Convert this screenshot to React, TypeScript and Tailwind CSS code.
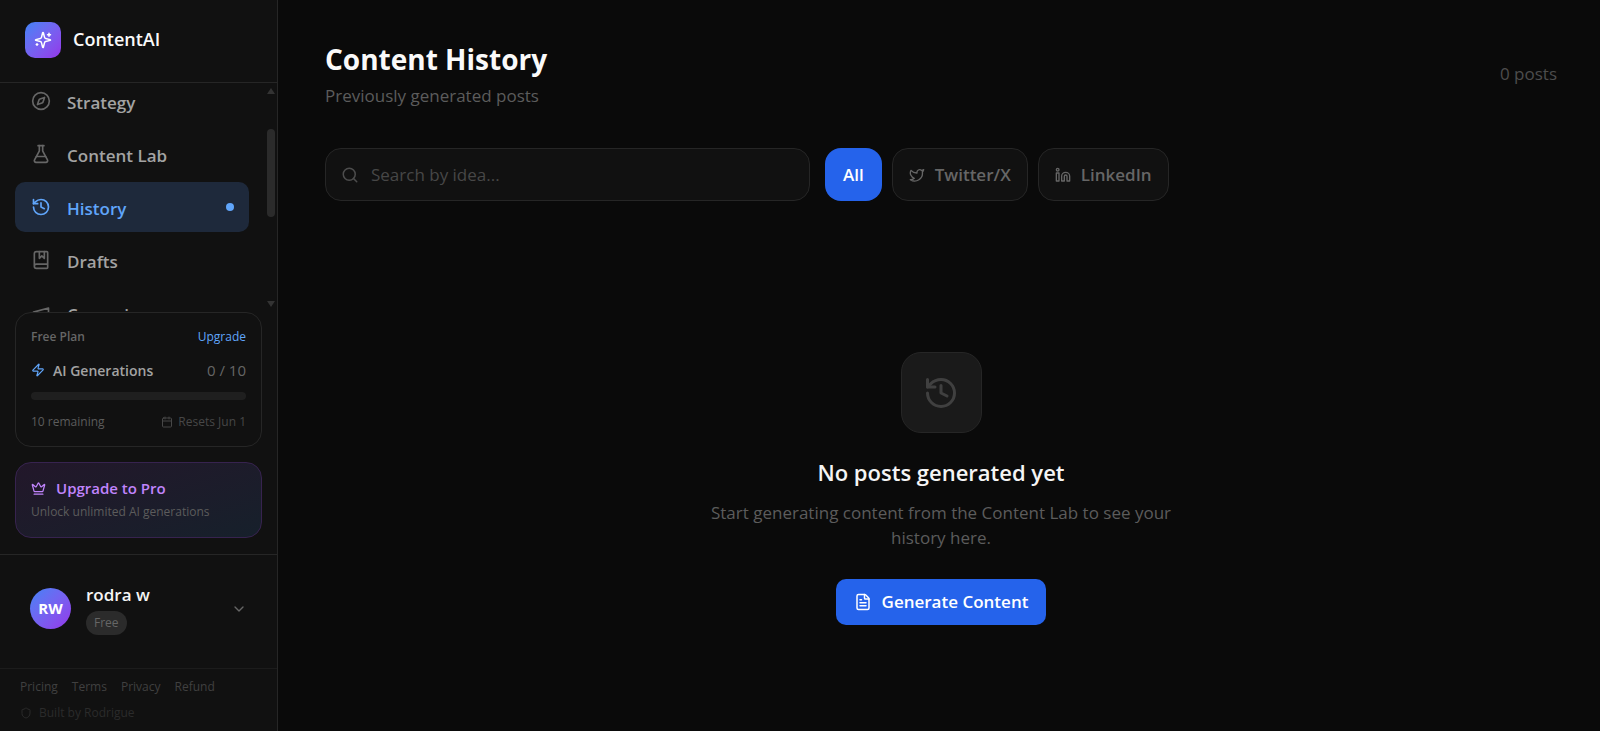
import React from "react";
import {
  Calendar,
  ChevronDown,
  Compass,
  Crown,
  FileText,
  FlaskConical,
  BookMarked,
  History,
  Linkedin,
  Search,
  Shield,
  Twitter,
  Zap,
} from "lucide-react";

const SparklesIcon = ({ className }: { className?: string }) => (
  <svg className={className} viewBox="0 0 24 24" fill="none" stroke="currentColor" strokeWidth="2" strokeLinecap="round" strokeLinejoin="round">
    <path d="M9.937 15.5A2 2 0 0 0 8.5 14.063l-6.135-1.582a.5.5 0 0 1 0-.962L8.5 9.936A2 2 0 0 0 9.937 8.5l1.582-6.135a.5.5 0 0 1 .963 0L14.063 8.5A2 2 0 0 0 15.5 9.937l6.135 1.581a.5.5 0 0 1 0 .964L15.5 14.063a2 2 0 0 0-1.437 1.437l-1.582 6.135a.5.5 0 0 1-.963 0z" />
    <path d="M20 3v4M22 5h-4M4 17v2M5 18H3" />
  </svg>
);

const MegaphoneIcon = ({ className }: { className?: string }) => (
  <svg className={className} viewBox="0 0 24 24" fill="none" stroke="currentColor" strokeWidth="2" strokeLinecap="round" strokeLinejoin="round">
    <path d="m3 11 18-5v12L3 14v-3z" />
    <path d="M11.6 16.8a3 3 0 1 1-5.8-1.6" />
  </svg>
);

const navItems = [
  { label: "Strategy", Icon: Compass },
  { label: "Content Lab", Icon: FlaskConical },
  { label: "History", Icon: History, active: true },
  { label: "Drafts", Icon: BookMarked },
  { label: "Campaigns", Icon: MegaphoneIcon },
];

const footerLinks = ["Pricing", "Terms", "Privacy", "Refund"];

const Sidebar = () => {
  return (
    <aside className="flex w-[278px] shrink-0 flex-col border-r border-[#262626] bg-[#111111]">
      <div className="flex h-[83px] shrink-0 items-center gap-3 border-b border-[#262626] px-[25px] pb-[3px]">
        <div className="flex size-9 items-center justify-center rounded-[10px] bg-linear-to-br from-[#3b82f6] to-[#9333ea]">
          <SparklesIcon className="size-[18px] text-white" />
        </div>
        <span className="text-[18px] font-semibold text-[#fafafa]">ContentAI</span>
      </div>

      <div className="relative min-h-0 flex-1 overflow-hidden">
        <nav className="-mt-[7px] flex flex-col gap-[3px] pr-7 pl-[15px]">
          {navItems.map(({ label, Icon, active }) => (
            <a
              key={label}
              href="#"
              className={
                active
                  ? "flex h-[50px] shrink-0 items-center gap-4 rounded-[10px] bg-[#1e293b] pr-[15px] pl-4 text-[17px] font-semibold text-[#60a5fa]"
                  : "flex h-[50px] shrink-0 items-center gap-4 rounded-[10px] pr-[15px] pl-4 text-[17px] font-semibold text-[#a3a3a3]"
              }
            >
              <Icon className={active ? "size-5" : "size-5 text-[#666666]"} />
              <span className="pt-[3px]">{label}</span>
              {active && <span className="ml-auto size-2 rounded-full bg-[#60a5fa]" />}
            </a>
          ))}
        </nav>
        <div className="absolute inset-y-0 right-0 flex w-[13px] flex-col items-center py-[5px]">
          <span className="border-x-4 border-b-[6px] border-x-transparent border-b-[#333333]" />
          <span className="mt-[35px] h-[88px] w-2 rounded-full bg-[#2b2b2b]" />
          <span className="mt-auto border-x-4 border-t-[6px] border-x-transparent border-t-[#333333]" />
        </div>
      </div>

      <div className="mx-[15px] rounded-2xl border border-[#262626] px-[15px] py-[14px]">
        <div className="flex h-5 items-center justify-between text-[12px]">
          <span className="font-semibold text-[#666666]">Free Plan</span>
          <a href="#" className="font-medium text-[#60a5fa]">Upgrade</a>
        </div>
        <div className="mt-[13px] flex h-5 items-center text-[14px]">
          <Zap className="size-[14px] text-[#60a5fa]" />
          <span className="ml-2 font-semibold text-[#a3a3a3]">AI Generations</span>
          <span className="ml-auto text-[15px] text-[#666666]">0 / 10</span>
        </div>
        <div className="mt-3 h-2 rounded-full bg-[#1f1f1f]" />
        <div className="mt-3 flex h-5 items-center text-[12px]">
          <span className="text-[#5c5c5c]">10 remaining</span>
          <span className="ml-auto flex items-center gap-[5px] text-[#474747]">
            <Calendar className="size-3" />
            Resets Jun 1
          </span>
        </div>
      </div>

      <a
        href="#"
        className="mx-[15px] mt-[15px] flex flex-col gap-1 rounded-2xl border border-[#37234f] bg-linear-to-br from-[#22172a] to-[#16202b] px-[15px] py-[15px]"
      >
        <span className="flex h-5 items-center gap-[10px] text-[15px] font-semibold text-[#c084fc]">
          <Crown className="size-[15px]" />
          Upgrade to Pro
        </span>
        <span className="h-5 text-[12px] leading-5 text-[#5c5c5c]">Unlock unlimited AI generations</span>
      </a>

      <div className="mt-4 border-t border-[#262626] px-[15px] pt-3 pb-[18px]">
        <button className="flex h-[83px] w-full items-center gap-[15px] px-[15px] text-left">
          <span className="flex size-[41px] items-center justify-center rounded-full bg-linear-to-br from-[#3b82f6] to-[#9333ea] text-[15px] font-bold text-white">
            RW
          </span>
          <span className="flex flex-col items-start gap-1">
            <span className="text-[17px] leading-6 font-semibold text-[#f5f5f5]">rodra w</span>
            <span className="rounded-full bg-[#2b2b2b] px-2 text-[12px] leading-6 text-[#666666]">Free</span>
          </span>
          <ChevronDown className="ml-auto size-4 text-[#666666]" />
        </button>
      </div>

      <footer className="border-t border-[#1c1c1c] px-5 py-2 text-[12px] leading-5">
        <div className="flex gap-[14px] text-[#404040]">
          {footerLinks.map((link) => (
            <a key={link} href="#">{link}</a>
          ))}
        </div>
        <div className="mt-[6px] flex items-center gap-[7px] text-[#2b2b2b]">
          <Shield className="size-3" />
          Built by Rodrigue
        </div>
      </footer>
    </aside>
  );
};

const EmptyState = () => {
  return (
    <section className="mt-[151px] flex flex-col items-center text-center">
      <div className="flex size-[81px] items-center justify-center rounded-[20px] border border-[#262626] bg-[#1a1a1a]">
        <History className="size-9 text-[#404040]" />
      </div>
      <h2 className="mt-[23px] text-[22px] leading-8 font-semibold text-[#f5f5f5]">No posts generated yet</h2>
      <p className="mt-3 max-w-[480px] text-[17px] leading-[25px] text-[#5c5c5c]">
        Start generating content from the Content Lab to see your history here.
      </p>
      <button className="mt-[29px] flex h-[46px] items-center gap-[10px] rounded-[10px] bg-[#2563eb] px-[18px] text-[17px] font-semibold text-white">
        <FileText className="size-[18px]" />
        Generate Content
      </button>
    </section>
  );
};

const App = () => {
  return (
    <div className="flex h-screen bg-[#0a0a0a] font-['Open_Sans','Noto_Sans',sans-serif]">
      <Sidebar />
      <main className="min-w-0 flex-1 overflow-hidden pt-10 pr-[43px] pl-[47px]">
        <header className="flex items-center justify-between">
          <div>
            <h1 className="text-[28px] leading-[38px] font-bold text-[#fafafa]">Content History</h1>
            <p className="mt-[6px] text-[17px] leading-6 text-[#5c5c5c]">Previously generated posts</p>
          </div>
          <span className="text-[17px] text-[#4d4d4d]">0 posts</span>
        </header>

        <div className="mt-10 flex h-[53px] gap-[10px]">
          <label className="mr-[5px] flex w-[485px] items-center gap-3 rounded-2xl border border-[#262626] bg-[#111111] px-[15px]">
            <Search className="size-[18px] shrink-0 text-[#4d4d4d]" />
            <input
              type="text"
              aria-label="Search by idea"
              placeholder="Search by idea..."
              className="min-w-0 flex-1 bg-transparent text-[17px] text-[#f5f5f5] outline-none placeholder:text-[#474747]"
            />
          </label>
          <button className="rounded-2xl bg-[#2563eb] px-[18px] text-[17px] font-semibold text-white">All</button>
          <button className="flex items-center gap-[10px] rounded-2xl border border-[#262626] bg-[#111111] px-4 text-[17px] font-semibold text-[#666666]">
            <Twitter className="size-4" />
            Twitter/X
          </button>
          <button className="flex items-center gap-[10px] rounded-2xl border border-[#262626] bg-[#111111] px-4 text-[17px] font-semibold text-[#666666]">
            <Linkedin className="size-4" />
            LinkedIn
          </button>
        </div>

        <EmptyState />
      </main>
    </div>
  );
};

export default App;
